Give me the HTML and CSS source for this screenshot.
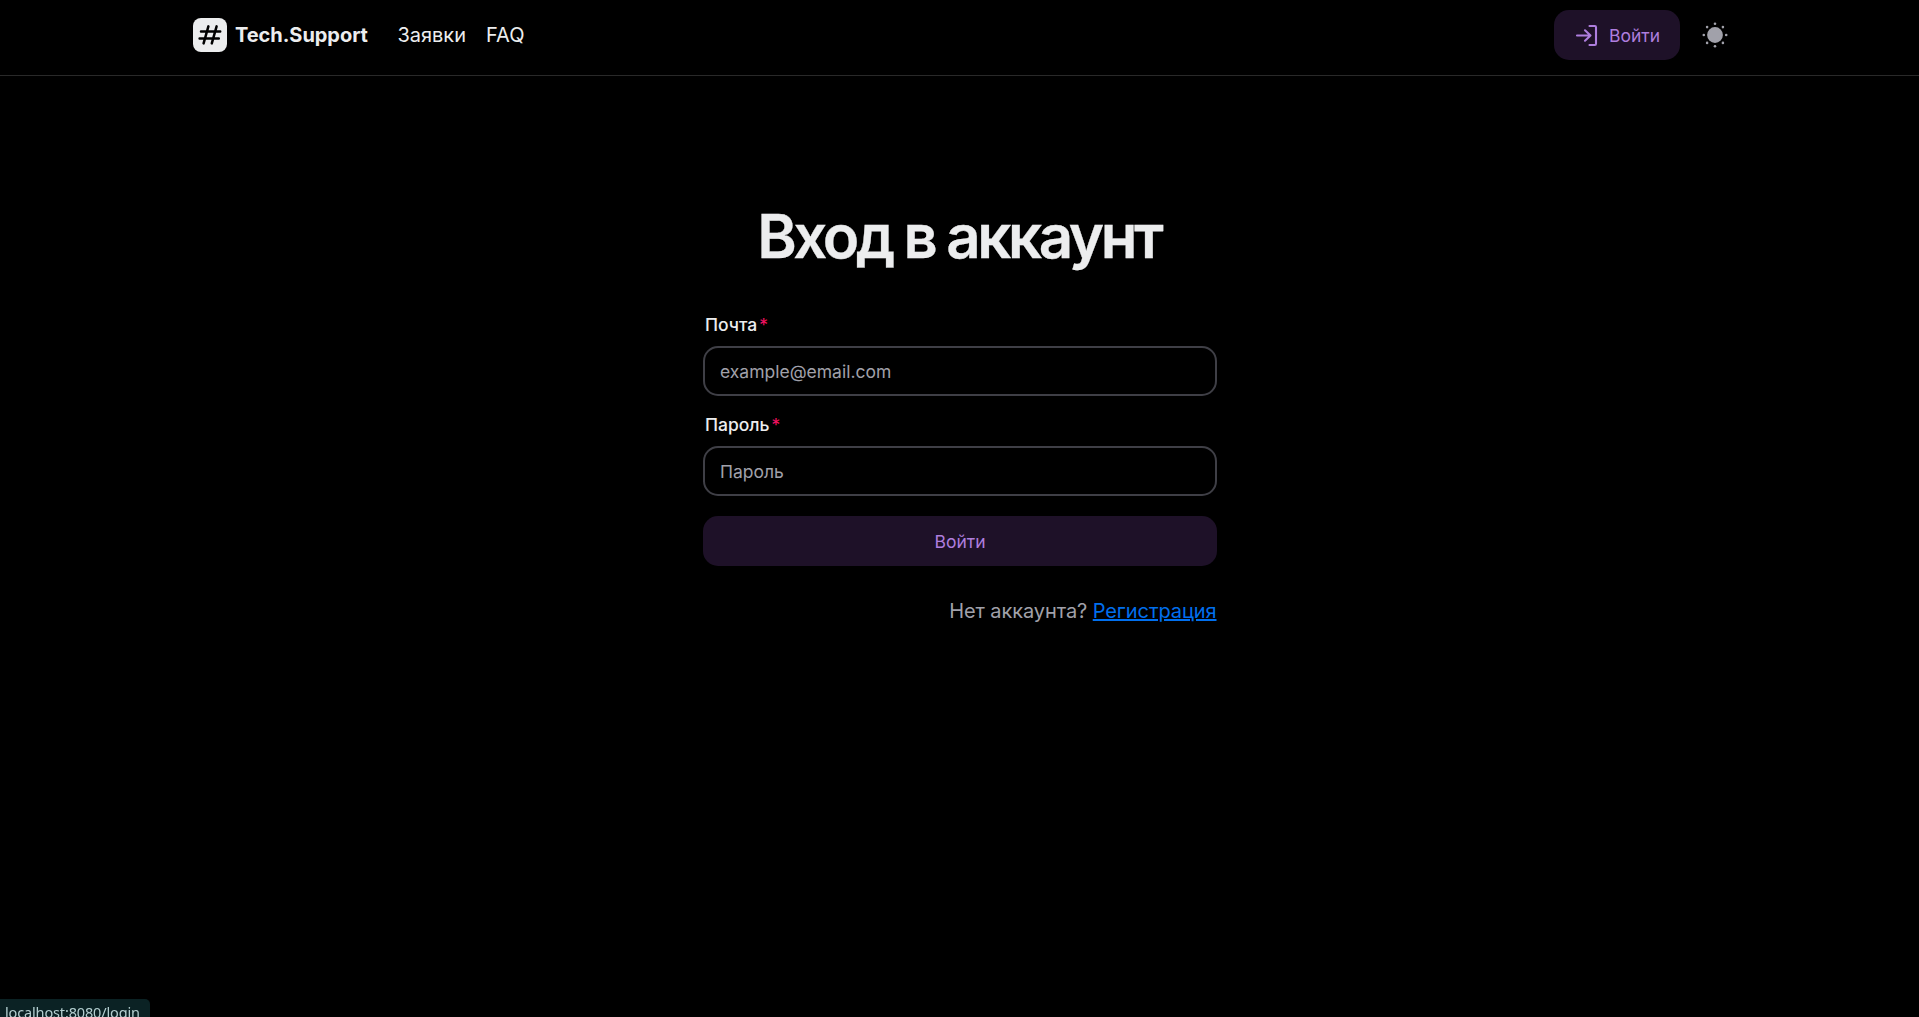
FILE: index.html
```html
<!DOCTYPE html>
<html lang="ru">
<head>
<meta charset="utf-8">
<title>Tech.Support</title>
<link rel="stylesheet" href="styles.css">
</head>
<body>
<header class="navbar">
  <div class="navbar-inner">
    <a class="brand" href="#">
      <svg class="brand-logo" viewBox="0 0 34 34" width="34" height="34">
        <rect width="34" height="34" rx="8" fill="#ecedee"/>
        <path d="M8 13.4H27.2M6.6 20.6H25.8M15.4 8.4L10.6 25.4M23.6 8.4L18.8 25.4" fill="none" stroke="#000" stroke-width="2.5" stroke-linecap="round"/>
      </svg>
      <span class="brand-name">Tech.Support</span>
    </a>
    <nav class="links">
      <a href="#">Заявки</a>
      <a href="#">FAQ</a>
    </nav>
    <div class="actions">
      <a class="button login" href="#">
        <svg viewBox="0 0 25 25" width="25" height="25" fill="none" stroke="currentColor" stroke-width="2.1" stroke-linecap="round" stroke-linejoin="round">
          <path d="M3 12.5H16.5M11 7.3l5.5 5.2l-5.5 5.2M15.5 3h5.3q1.2 0 1.2 1.2v16.6q0 1.2-1.2 1.2H15.5"/>
        </svg>
        <span>Войти</span>
      </a>
      <button class="theme-toggle" type="button" aria-label="Тема">
        <svg viewBox="0 0 28 28" width="28" height="28" fill="currentColor">
          <circle cx="14" cy="14" r="7.9"/>
          <circle cx="14" cy="2.8" r="1.3"/><circle cx="14" cy="25.2" r="1.3"/><circle cx="2.8" cy="14" r="1.3"/><circle cx="25.2" cy="14" r="1.3"/><circle cx="6.1" cy="6.1" r="1.3"/><circle cx="21.9" cy="6.1" r="1.3"/><circle cx="6.1" cy="21.9" r="1.3"/><circle cx="21.9" cy="21.9" r="1.3"/>
        </svg>
      </button>
    </div>
  </div>
</header>
<main class="page">
  <h1 class="title">Вход в аккаунт</h1>
  <form class="form">
    <div class="field">
      <label class="label" for="email">Почта<span class="required">*</span></label>
      <input class="input" id="email" type="email" placeholder="example@email.com">
    </div>
    <div class="field">
      <label class="label" for="password">Пароль<span class="required">*</span></label>
      <input class="input" id="password" type="password" placeholder="Пароль">
    </div>
    <button class="button submit" type="button">Войти</button>
  </form>
  <p class="hint">Нет аккаунта? <a class="hint-link" href="#">Регистрация</a></p>
</main>
<div class="status">localhost:8080/login</div>
</body>
</html>
```
FILE: styles.css
```css
* { box-sizing: border-box; }
body {
  margin: 0;
  height: 1017px;
  overflow: hidden;
  background: #000;
  color: #ecedee;
  font-family: Inter, "Liberation Sans", sans-serif;
  font-size: 20px;
}
a { color: inherit; text-decoration: none; }
svg { display: block; flex: none; }
.navbar { height: 76px; border-bottom: 1px solid #292929; }
.navbar-inner {
  display: flex;
  align-items: center;
  width: 1533px;
  height: 70px;
  margin: 0 auto;
}
.brand { display: flex; align-items: center; gap: 8px; }
.brand-name { font-weight: 700; letter-spacing: -0.05px; }
.links { display: flex; gap: 20px; margin-left: 29.5px; }
.actions { display: flex; align-items: center; gap: 21px; margin: 0 -3px 0 auto; }
.button {
  display: flex;
  align-items: center;
  justify-content: center;
  gap: 10px;
  height: 50px;
  padding: 0 20px;
  border: 0;
  border-radius: 15px;
  background: #1e1128;
  color: #ae7ede;
  font: 400 17.5px Inter, "Liberation Sans", sans-serif;
}
.login { width: 126px; }
.theme-toggle { padding: 0; border: 0; background: none; color: #a1a1aa; }
.page { width: 514px; margin: 0 auto; padding-top: 123px; }
.title {
  margin: 0;
  font-size: 60px;
  font-weight: 600;
  line-height: 75px;
  letter-spacing: -3.4px;
  text-indent: -1.5px;
  text-align: center;
  white-space: nowrap;
  -webkit-text-stroke: 0.3px currentColor;
}
.form { display: flex; flex-direction: column; margin-top: 38px; }
.field { display: flex; flex-direction: column; gap: 9px; margin-bottom: 16px; }
.label { padding-left: 2.5px; font-size: 17.5px; font-weight: 500; line-height: 25px; }
.required { margin-left: 2px; color: #f31260; font-weight: 400; }
.input {
  height: 50px;
  padding: 0 15.5px;
  border: 2px solid #3f3f46;
  border-radius: 15px;
  background: transparent;
  color: #ecedee;
  font: 400 17.5px Inter, "Liberation Sans", sans-serif;
}
.input::placeholder { color: #a1a1aa; opacity: 1; }
.submit { width: 100%; margin-top: 4px; padding-left: 21px; }
.hint { margin: 30px 0 0; color: #a1a1aa; line-height: 30px; letter-spacing: -0.09px; text-align: right; }
.hint-link { color: #006fee; text-decoration: underline; }
.status {
  position: fixed;
  left: 0;
  bottom: 0;
  width: 150px;
  height: 18px;
  padding-left: 5px;
  border-radius: 0 5px 0 0;
  background: #0b2224;
  color: #b4cfd0;
  font: 14.5px/27px "Noto Sans", sans-serif;
  letter-spacing: -0.15px;
  white-space: nowrap;
}
```
